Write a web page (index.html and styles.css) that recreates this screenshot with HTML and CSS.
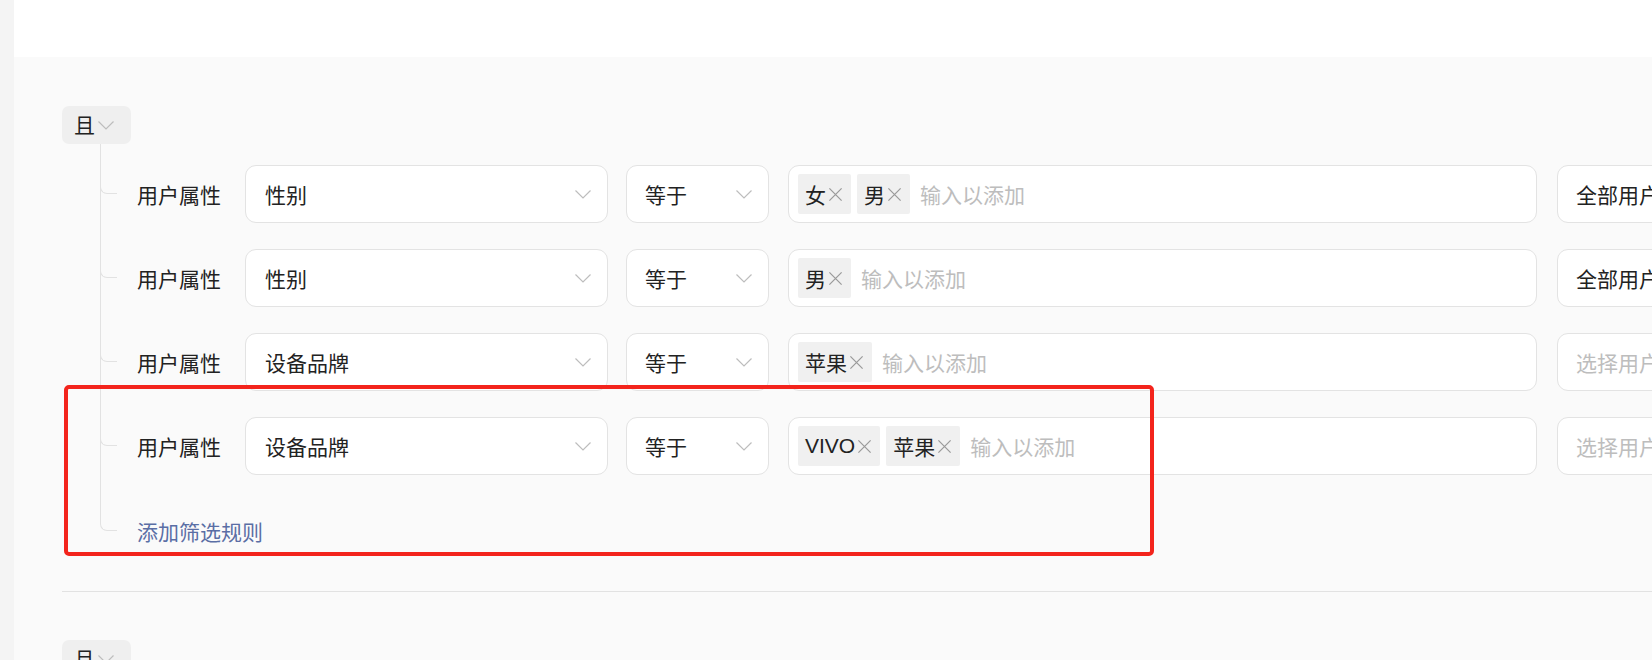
FILE: index.html
```html
<!DOCTYPE html>
<html lang="zh-CN">
<head>
    <meta charset="UTF-8">
    <meta name="viewport" content="width=device-width, initial-scale=1.0">
    <title>筛选规则</title>
    <link rel="stylesheet" href="styles.css">
</head>
<body>
    <div class="page">
        <div class="side"></div>
        <div class="main">
            <div class="header"></div>

            <div class="content">
                <!-- first condition group -->
                <div class="group">
                    <div class="logic">
                        <span>且</span>
                        <svg class="chevron" width="16" height="9" viewBox="0 0 16 9"><polyline points="0.5,0.5 8,8 15.5,0.5"/></svg>
                    </div>

                    <div class="rules">
                        <div class="rule">
                            <span class="rule-label">用户属性</span>
                            <div class="box field">
                                <span>性别</span>
                                <svg class="chevron" width="16" height="9" viewBox="0 0 16 9"><polyline points="0.5,0.5 8,8 15.5,0.5"/></svg>
                            </div>
                            <div class="box operator">
                                <span>等于</span>
                                <svg class="chevron" width="16" height="9" viewBox="0 0 16 9"><polyline points="0.5,0.5 8,8 15.5,0.5"/></svg>
                            </div>
                            <div class="box values">
                                <span class="tag">女<svg class="close" width="16" height="16" viewBox="0 0 16 16"><path d="M1.5 1.5 L14.5 14.5 M14.5 1.5 L1.5 14.5"/></svg></span>
                                <span class="tag">男<svg class="close" width="16" height="16" viewBox="0 0 16 16"><path d="M1.5 1.5 L14.5 14.5 M14.5 1.5 L1.5 14.5"/></svg></span>
                                <span class="placeholder">输入以添加</span>
                            </div>
                            <div class="box scope">
                                <span>全部用户</span>
                            </div>
                        </div>

                        <div class="rule">
                            <span class="rule-label">用户属性</span>
                            <div class="box field">
                                <span>性别</span>
                                <svg class="chevron" width="16" height="9" viewBox="0 0 16 9"><polyline points="0.5,0.5 8,8 15.5,0.5"/></svg>
                            </div>
                            <div class="box operator">
                                <span>等于</span>
                                <svg class="chevron" width="16" height="9" viewBox="0 0 16 9"><polyline points="0.5,0.5 8,8 15.5,0.5"/></svg>
                            </div>
                            <div class="box values">
                                <span class="tag">男<svg class="close" width="16" height="16" viewBox="0 0 16 16"><path d="M1.5 1.5 L14.5 14.5 M14.5 1.5 L1.5 14.5"/></svg></span>
                                <span class="placeholder">输入以添加</span>
                            </div>
                            <div class="box scope">
                                <span>全部用户</span>
                            </div>
                        </div>

                        <div class="rule">
                            <span class="rule-label">用户属性</span>
                            <div class="box field">
                                <span>设备品牌</span>
                                <svg class="chevron" width="16" height="9" viewBox="0 0 16 9"><polyline points="0.5,0.5 8,8 15.5,0.5"/></svg>
                            </div>
                            <div class="box operator">
                                <span>等于</span>
                                <svg class="chevron" width="16" height="9" viewBox="0 0 16 9"><polyline points="0.5,0.5 8,8 15.5,0.5"/></svg>
                            </div>
                            <div class="box values">
                                <span class="tag">苹果<svg class="close" width="16" height="16" viewBox="0 0 16 16"><path d="M1.5 1.5 L14.5 14.5 M14.5 1.5 L1.5 14.5"/></svg></span>
                                <span class="placeholder">输入以添加</span>
                            </div>
                            <div class="box scope">
                                <span class="placeholder">选择用户</span>
                            </div>
                        </div>

                        <div class="rule">
                            <span class="rule-label">用户属性</span>
                            <div class="box field">
                                <span>设备品牌</span>
                                <svg class="chevron" width="16" height="9" viewBox="0 0 16 9"><polyline points="0.5,0.5 8,8 15.5,0.5"/></svg>
                            </div>
                            <div class="box operator">
                                <span>等于</span>
                                <svg class="chevron" width="16" height="9" viewBox="0 0 16 9"><polyline points="0.5,0.5 8,8 15.5,0.5"/></svg>
                            </div>
                            <div class="box values">
                                <span class="tag">VIVO<svg class="close" width="16" height="16" viewBox="0 0 16 16"><path d="M1.5 1.5 L14.5 14.5 M14.5 1.5 L1.5 14.5"/></svg></span>
                                <span class="tag">苹果<svg class="close" width="16" height="16" viewBox="0 0 16 16"><path d="M1.5 1.5 L14.5 14.5 M14.5 1.5 L1.5 14.5"/></svg></span>
                                <span class="placeholder">输入以添加</span>
                            </div>
                            <div class="box scope">
                                <span class="placeholder">选择用户</span>
                            </div>
                        </div>

                        <div class="rule add-rule">
                            <a class="add-link">添加筛选规则</a>
                        </div>
                    </div>
                </div>

                <div class="divider"></div>

                <!-- second condition group -->
                <div class="group">
                    <div class="logic">
                        <span>且</span>
                        <svg class="chevron" width="16" height="9" viewBox="0 0 16 9"><polyline points="0.5,0.5 8,8 15.5,0.5"/></svg>
                    </div>
                </div>
            </div>

            <!-- annotation frame -->
            <div class="highlight"></div>
        </div>
    </div>
</body>
</html>
```

FILE: styles.css
```css
* {
    box-sizing: border-box;
}

body {
    margin: 0;
    font-family: "Liberation Sans", "Noto Sans CJK SC", sans-serif;
    font-size: 21px;
    color: #222;
    background-color: #f5f5f5;
}

.page {
    display: flex;
    width: 1652px;
    height: 660px;
    overflow: hidden;
}

.side {
    width: 14px;
    flex-shrink: 0;
    background-color: #f4f4f4;
}

.main {
    position: relative;
    flex: 1;
    min-width: 0;
    background-color: #fafafa;
}

.header {
    height: 57px;
    background-color: #fff;
}

.content {
    padding: 49px 0 0 48px;
}

.logic {
    display: inline-flex;
    align-items: center;
    height: 38px;
    padding: 0 17px 0 12px;
    border-radius: 7px;
    background-color: #efefef;
    line-height: 1;
}

.logic .chevron {
    margin-left: 3px;
}

.chevron {
    flex-shrink: 0;
    fill: none;
    stroke: #bdbdbd;
    stroke-width: 1.2;
}

.rules {
    display: flex;
    flex-direction: column;
    gap: 26px;
    margin: 21px 0 0 38px;
}

.rule {
    position: relative;
    display: flex;
    align-items: center;
    height: 58px;
    padding-left: 37px;
}

/* tree branch */
.rule::before {
    content: "";
    position: absolute;
    left: 0;
    top: -90px;
    bottom: 50%;
    width: 16px;
    border-left: 1px solid #e2e2e2;
    border-bottom: 1px solid #e2e2e2;
    border-bottom-left-radius: 7px;
}

.rule:first-child::before {
    top: -21px;
}

.rule-label {
    width: 108px;
    flex-shrink: 0;
}

.box {
    display: flex;
    align-items: center;
    flex-shrink: 0;
    height: 58px;
    border: 1px solid #e3e3e3;
    border-radius: 11px;
    background-color: #fff;
}

.field {
    width: 363px;
    justify-content: space-between;
    padding: 0 16px 0 19px;
}

.operator {
    width: 143px;
    margin-left: 18px;
    justify-content: space-between;
    padding: 0 16px 0 18px;
}

.values {
    width: 749px;
    margin-left: 19px;
    padding-left: 9px;
    gap: 6px;
}

.scope {
    width: 220px;
    margin-left: 20px;
    padding-left: 18px;
}

.tag {
    display: inline-flex;
    align-items: center;
    height: 40px;
    padding: 0 8px 0 7px;
    background-color: #f0f0f0;
    border-radius: 2px;
}

.close {
    margin-left: 2px;
    width: 15px;
    height: 15px;
    fill: none;
    stroke: #9a9a9a;
    stroke-width: 1.3;
}

.placeholder {
    color: #bdbdbd;
}

.values .placeholder {
    margin-left: 4px;
}

.add-rule {
    height: 30px;
    margin-top: 15px;
}

.add-link {
    color: #5a6ea5;
    cursor: pointer;
}

.divider {
    height: 1px;
    margin: 45px 0 48px;
    background-color: #e2e2e2;
}

.highlight {
    position: absolute;
    left: 50px;
    top: 385px;
    width: 1090px;
    height: 171px;
    border: 4px solid #f3241c;
    border-radius: 5px;
    pointer-events: none;
}
```
